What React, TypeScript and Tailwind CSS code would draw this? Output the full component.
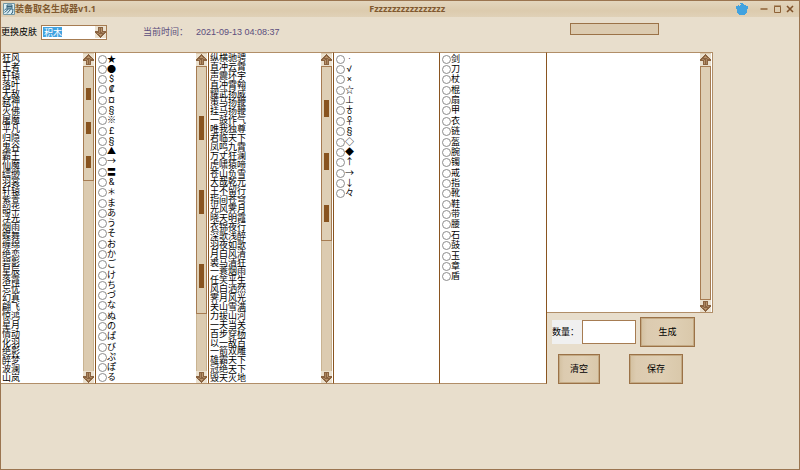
import { useState } from "react";

const NAMES = (
  "狂风 王者 轩辕 落叶 无敌 弑神 灭佛 屠魔 平凡 归隐 鬼谷 霸王 仙魔 缥缈 羽裳 轩辕 紫萱 韶华 浮光 " +
  "烟雨 蝶舞 缠绵 绝恋 碧影 星辰 落霞 忘忧 幻真 翩飞 惊鸿 星月 情动 化羽 绝影 醉梦 波澜 山岚"
).split(" ");

const IDIOMS = (
  "纵横驰骋 直冲云霄 声震环宇 直冲霄翰 耀武扬威 策马扬鞭 挂马扬鞭 一鼓作气 唯我独尊 君临天下 凤鸣九霄 " +
  "万丈狂澜 虎啸猿啼 苍山负雪 大哉乾元 王不留行 指间苍穹 光风霁月 晓天明霞 衣锦夜行 深歌浅醉 羽夜如歌 " +
  "月白风清 裘马清狂 一蓑烟雨 任笑平生 风白洒然 霁月风光 关山雪满 力拔山河 一夫当关 百步穿杨 以一敌百 " +
  "一箭双雕 雄霸天下 冠绝天下 毁天灭地"
).split(" ");

const PREFIXES = "★ ● $ ₡ ¤ § ※ £ § ▲ → 〓 & ＊ ま あ う そ お か ご け ち づ な ぬ の ぱ び ぷ ぽ る".split(" ");
const MARKS = "· √ × ☆ ⊥ ♁ ♀ § ◇ ◆ ↑ → ↓ 々".split(" ");
const ITEMS = "剑 刀 杖 棍 扇 甲 衣 链 盔 腕 镯 戒 指 靴 鞋 带 腰 石 鼓 玉 章 盾".split(" ");

const buttonStyle =
  "border border-[#9b7247] bg-[linear-gradient(90deg,#d3c0a0_0,#dccbb0_12%,#dfcfb4_60%,#d9c8aa_100%)] text-[9px] leading-3 text-black shadow-[inset_0_0_0_1px_#c4aa84]";

function ArrowIcon({ down = false }: { down?: boolean }) {
  return (
    <svg
      viewBox="0 0 11 12"
      className={down ? "h-3 w-[11px] shrink-0 rotate-180" : "h-3 w-[11px] shrink-0"}
      shapeRendering="crispEdges"
      aria-hidden="true"
    >
      <path d="M0 0h11v12H0z" fill="#ebe1cf" />
      <path d="M5 0h1v1h1v1h1v1h1v1h1v1h1v2H8v4H3V7H0V5h1V4h1V3h1V2h1V1h1z" fill="#8a6340" />
      <path d="M5 2h1v1h1v1H4V3h1zM4 6h1v4H4z" fill="#b8946c" />
      <path d="M2 5h2v1H2zM7 4h2v1H7zM6 5h1v5H6z" fill="#a98560" />
    </svg>
  );
}

function ScrollBar({ thumb, mark }: { thumb: string; mark?: string }) {
  return (
    <div className="flex h-full w-[11px] shrink-0 flex-col bg-[#dccbb0] pt-px">
      <ArrowIcon />
      <div className="min-h-0 flex-1 border-x border-[#c9b391]">
        <div className={"-mx-px flex flex-col items-center justify-between border border-[#a67c52] bg-[#decfb5] " + thumb}>
          {mark && [0, 1, 2].map((i) => <span key={i} className={"w-[5px] bg-[#885420] " + mark} />)}
        </div>
      </div>
      <ArrowIcon down />
    </div>
  );
}

function TextList({ rows }: { rows: string[] }) {
  return (
    <ul className="grid h-full flex-1 auto-rows-fr overflow-hidden pt-px pl-px text-[9px] leading-[9px]">
      {rows.map((row, i) => (
        <li key={i} className="min-h-0 whitespace-nowrap">
          {row}
        </li>
      ))}
    </ul>
  );
}

function RadioList({ name, options, height }: { name: string; options: string[]; height: string }) {
  return (
    <div className="h-full flex-1 pt-px font-['Roboto','Noto_Sans_CJK_SC','DejaVu_Sans',sans-serif]">
      <div className={"grid auto-rows-fr pl-0.5 text-[9px] leading-[9px] " + height}>
        {options.map((o, i) => (
          <label key={i} className="flex min-h-0 items-center">
            <input
              type="radio"
              name={name}
              value={i}
              className="m-0 size-[9px] shrink-0 appearance-none rounded-full border border-[#8c8c8c] bg-white checked:bg-[#885420]"
            />
            <span className="w-[9px] text-center">{o}</span>
          </label>
        ))}
      </div>
    </div>
  );
}

export default function App() {
  const [skin, setSkin] = useState("积木");
  const [count, setCount] = useState("");

  return (
    <main className="min-h-screen border border-[#9b7550] bg-[#e8decc] font-['Liberation_Sans','Noto_Sans_CJK_SC',sans-serif] text-[9px] text-black">
      <header className="grid h-4 grid-cols-[51fr_auto_49fr] items-center bg-[linear-gradient(#e3d6be,#dccbae_60%,#e0d1b7)] px-0.5 font-['Noto_Sans','Noto_Sans_CJK_SC',sans-serif] font-bold text-[#80592f]">
        <div className="flex items-center">
          <svg viewBox="0 0 12 12" className="size-3" aria-hidden="true">
            <path d="M0.5 0.5h11v11h-11z" fill="#d9edf4" stroke="#7297a5" />
            <path d="M4 2h5v3H4zM4 3.5h5M3 5.5L1.5 7.5M3 6h7l-.5 4-1.5 .5M5 6.5l-3.5 3M7.5 6.5L4 10.5" fill="none" stroke="#35637b" />
          </svg>
          <h1>装备取名生成器v1.1</h1>
        </div>
        <span>Fzzzzzzzzzzzzzzzz</span>
        <div className="flex items-center justify-end gap-[5px] pr-[3px]">
          <button aria-label="换肤" className="mr-[7px]">
            <svg viewBox="0 0 12 12" className="block size-3" shapeRendering="crispEdges">
              <path d="M4 0h3v1h1v1h2v1h2v3h-1v4h-1v1H9v1H3v-1H2v-1H1V6H0V3h2V2h1v1h1V2h1V1H4z" fill="#41a2df" />
            </svg>
          </button>
          <button aria-label="最小化">
            <svg viewBox="0 0 8 8" className="block size-2">
              <path d="M0.5 4h7" stroke="#8e6237" strokeWidth="1.5" />
            </svg>
          </button>
          <button aria-label="最大化">
            <svg viewBox="0 0 8 8" className="block size-2">
              <path d="M1.5 1.5h6v6h-6zM1 1h7" fill="none" stroke="#8e6237" />
            </svg>
          </button>
          <button aria-label="关闭">
            <svg viewBox="0 0 8 8" className="block size-2">
              <path d="M1 1l6 6M7 1L1 7" stroke="#80522a" strokeWidth="1.6" />
            </svg>
          </button>
        </div>
      </header>

      <div className="flex h-[35px] items-start pt-1.5">
        <div className="flex items-center pt-0.5">
          <label htmlFor="skin" className="w-10">更换皮肤</label>
          <div className="relative">
            <select
              id="skin"
              value={skin}
              onChange={(e) => setSkin(e.target.value)}
              className="block h-[15px] w-[66px] appearance-none border border-[#a67c52] bg-white bg-[linear-gradient(#41a2df,#41a2df)] bg-[length:19px_10px] bg-[position:1px_1px] bg-no-repeat pl-0.5 text-[9px] leading-3 text-white"
            >
              <option className="text-black">积木</option>
            </select>
            <span className="pointer-events-none absolute top-px right-px">
              <ArrowIcon down />
            </span>
          </div>
        </div>
        <p className="ml-9 flex gap-2 pt-0.5 leading-[15px] text-[#5b4d7c]">
          <span className="w-[45px]">当前时间：</span>
          <time>2021-09-13 04:08:37</time>
        </p>
        <div className="mr-[140px] ml-auto h-3 w-[89px] border border-[#9b7247] bg-[#dccbb0]" />
      </div>

      <div className="grid grid-cols-[95fr_113fr_125fr_106fr_107fr_252fr] items-start">
        <section className="flex h-[332px] border-y border-r border-y-[#b18e68] border-r-[#8a5520] bg-white pr-px">
          <TextList rows={NAMES} />
          <ScrollBar thumb="h-[115px] pt-[21px] pb-3" mark="h-3" />
        </section>
        <section className="flex h-[332px] border-y border-r border-y-[#b18e68] border-r-[#8a5520] bg-white pr-px">
          <RadioList name="prefix" options={PREFIXES} height="h-[329px]" />
          <ScrollBar thumb="h-[248px] pt-[49px] pb-[25px]" mark="h-6" />
        </section>
        <section className="flex h-[332px] border-y border-r border-y-[#b18e68] border-r-[#8a5520] bg-white pr-px">
          <TextList rows={IDIOMS} />
          <ScrollBar thumb="h-[175px] pt-[33px] pb-[18px]" mark="h-[17px]" />
        </section>
        <section className="flex h-[332px] border-y border-r border-y-[#b18e68] border-r-[#8a5520] bg-white">
          <RadioList name="mark" options={MARKS} height="h-[145px]" />
        </section>
        <section className="flex h-[332px] border-y border-r border-y-[#b18e68] border-r-[#8a5520] bg-white">
          <RadioList name="item" options={ITEMS} height="h-[228px]" />
        </section>

        <div>
          <section className="flex h-[261px] w-[66%] justify-end border-y border-r border-[#b18e68] bg-white pr-px">
            <ScrollBar thumb="h-full" />
          </section>
          <div className="mt-1 flex items-center pl-[5px]">
            <label htmlFor="count" className="h-6 w-[30px] bg-[#f0f0f0] leading-6 whitespace-nowrap">
              数量：
            </label>
            <input
              id="count"
              value={count}
              onChange={(e) => setCount(e.target.value)}
              className="h-6 w-[54px] border border-[#a67c52] bg-white px-1 text-[9px]"
            />
            <button className={"ml-1 h-[30px] w-[55px] " + buttonStyle}>生成</button>
          </div>
          <div className="mt-[7px] flex gap-[29px] pl-[11px]">
            <button className={"h-[30px] w-[42px] " + buttonStyle}>清空</button>
            <button className={"h-[30px] w-[54px] " + buttonStyle}>保存</button>
          </div>
        </div>
      </div>
    </main>
  );
}
